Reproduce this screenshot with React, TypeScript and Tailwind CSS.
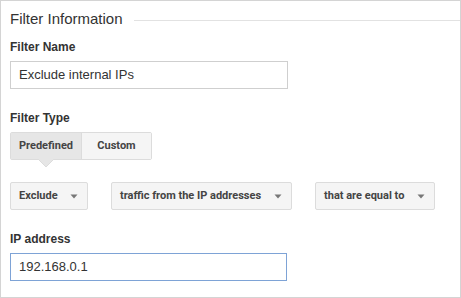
const Caret = () => (
  <svg width="8" height="5" viewBox="0 0 8 5" className="shrink-0">
    <path d="M0.5 0.5 L7.5 0.5 L4 4.5 Z" fill="#777" />
  </svg>
);

const Dropdown = ({ label, width }: { label: string; width: string }) => (
  <div
    className={`${width} h-[28px] flex items-center justify-between pl-[8px] pr-[9px] bg-[#f5f5f5] border border-[#dcdcdc] rounded-[2px] text-[11px] font-bold text-[#444]`}
    style={{ fontFamily: "Roboto, 'Liberation Sans', sans-serif" }}
  >
    <span>{label}</span>
    <Caret />
  </div>
);

export default function App() {
  return (
    <div
      className="w-[461px] h-[298px] bg-white border border-[#d4d4d4] pt-[8px] pl-[9px] text-[#333]"
      style={{ fontFamily: "'Liberation Sans', Arial, sans-serif" }}
    >
      {/* header */}
      <div className="flex items-center gap-[11px]">
        <p className="text-[15px] leading-[20px] text-[#333]">Filter Information</p>
        <div className="flex-1 h-px bg-[#e2e2e2] mt-[2px]" />
      </div>

      <p className="mt-[10px] text-[12px] leading-[16px] font-bold">Filter Name</p>
      <div className="mt-[6px] w-[278px] h-[28px] border border-[#cfcfcf] flex items-center pl-[8px] text-[13px]">
        Exclude internal IPs
      </div>

      <p className="mt-[21px] text-[12px] leading-[16px] font-bold">Filter Type</p>
      <div
        className="relative mt-[6px] flex w-[142px] h-[28px] border border-[#dcdcdc] rounded-[2px] text-[11px] font-bold text-[#444]"
        style={{ fontFamily: "Roboto, 'Liberation Sans', sans-serif" }}
      >
        <div className="w-[71px] flex items-center justify-center bg-[#e6e6e6] border-r border-[#dcdcdc]">
          Predefined
        </div>
        <div className="flex-1 flex items-center justify-center bg-[#f5f5f5]">Custom</div>
        <svg width="16" height="9" viewBox="0 0 16 9" className="absolute left-[27px] top-[26px]">
          <path d="M0.5 0.5 L8 8 L15.5 0.5" fill="#e6e6e6" stroke="#dcdcdc" />
          <rect x="1" y="0" width="14" height="1" fill="#e6e6e6" />
        </svg>
      </div>

      <div className="mt-[22px] flex gap-[23px]">
        <Dropdown label="Exclude" width="w-[78px]" />
        <Dropdown label="traffic from the IP addresses" width="w-[181px]" />
        <Dropdown label="that are equal to" width="w-[120px]" />
      </div>

      <p className="mt-[21px] text-[12px] leading-[16px] font-bold">IP address</p>
      <div className="mt-[6px] w-[277px] h-[28px] border border-[#7ea3d6] flex items-center pl-[8px] text-[13px]">
        192.168.0.1
      </div>
    </div>
  );
}
